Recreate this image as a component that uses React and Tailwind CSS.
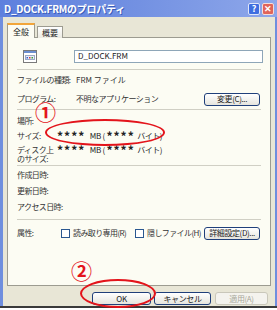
import React from "react";

const font = { fontFamily: '"Noto Sans CJK JP", "Noto Sans", sans-serif' };

const Sep = () => <div className="mx-[9px] h-px bg-[#d0cfc4]" />;

const Label = ({ children, w = "w-[59px]", className = "" }) => (
  <div className={w + " shrink-0 whitespace-nowrap text-[8px] tracking-[-0.6px] text-[#333] " + className}>
    {children}
  </div>
);

const XpButton = ({ children, className = "", disabled }) => (
  <div
    className={
      "h-[13px] rounded-[3px] border flex items-center justify-center whitespace-nowrap text-[8px] tracking-[-0.4px] leading-none " +
      (disabled
        ? "border-[#c9c7ba] bg-[#f4f3ee] text-[#a8a799]"
        : "border-[#1f3f7a] bg-gradient-to-b from-white to-[#e6e5de] text-[#222]") +
      " " +
      className
    }
  >
    {children}
  </div>
);

const Checkbox = () => <div className="w-[9px] h-[9px] border border-[#2a5790] bg-white shrink-0" />;

const FileIcon = () => (
  <svg width="14" height="13" viewBox="0 0 14 13">
    <rect x="0.5" y="0.5" width="13" height="12" fill="#fff" stroke="#7a7a7a" />
    <rect x="1" y="1" width="12" height="2" fill="#6c8fd0" />
    <rect x="2.5" y="5.5" width="9" height="4" fill="#e8eef8" stroke="#9aa9c6" />
    <rect x="3.5" y="7" width="1.5" height="1.5" fill="#3b5bd0" />
    <rect x="6" y="7" width="1.5" height="1.5" fill="#d03a3a" />
    <rect x="8.5" y="7" width="1.5" height="1.5" fill="#3b9a3b" />
  </svg>
);

const SizeValue = () => (
  <div className="h-[10px] text-[8px] text-[#222] whitespace-pre leading-none flex items-center">
    <span className="font-bold text-[12px] leading-[10px] tracking-[1px]">****</span>
    <span className="tracking-[-0.3px]">{"   MB ( "}</span>
    <span className="font-bold text-[12px] leading-[10px] tracking-[1px]">****</span>
    <span className="tracking-[-0.5px]">{"  バイト)"}</span>
  </div>
);

export default function App() {
  return (
    <div className="relative w-[277px] h-[310px] bg-white overflow-hidden" style={font}>
      <div className="w-[277px] h-[308px] flex flex-col bg-[#e8e6d6] border-b-2 border-[#3a3a3a]">
        {/* title bar */}
        <div className="h-[17px] shrink-0 flex items-center pl-[4px] pr-[3px] bg-gradient-to-r from-[#5e80de] via-[#7391e2] to-[#8ea7ea]">
          <div className="text-white text-[10px] font-bold tracking-tight leading-none flex-1 [text-shadow:1px_1px_0_#3b5cb8]">
            D_DOCK.FRMのプロパティ
          </div>
          <div className="w-[12px] h-[12px] rounded-[2px] bg-[#3f6ee0] border border-[#dfe6fa] text-white text-[9px] font-bold flex items-center justify-center leading-none">
            ?
          </div>
          <div className="ml-[2px] w-[12px] h-[12px] rounded-[2px] bg-[#e0645a] border border-[#f6dcd8] text-white text-[9px] font-bold flex items-center justify-center leading-none">
            ✕
          </div>
        </div>

        <div className="flex-1 flex flex-col border-l-[3px] border-r-[2px] border-[#6f8ede] pl-[4px] pr-[4px]">
          {/* tabs */}
          <div className="h-[17px] mt-[4px] flex items-end relative z-10 -mb-px">
            <div className="w-[28px] h-[15px] bg-[#fcfcf3] border-x border-[#9c9b90] border-t-2 border-t-[#f2a53a] flex items-center justify-center text-[8px] text-[#222]">
              全般
            </div>
            <div className="ml-[2px] w-[26px] h-[12px] bg-gradient-to-b from-white to-[#ecebe2] border border-b-0 border-[#9c9b90] flex items-center justify-center text-[8px] text-[#222]">
              概要
            </div>
          </div>

          {/* panel */}
          <div className="h-[249px] bg-[#fcfcf3] border border-[#9c9b90] flex flex-col">
            <div className="mt-[10px] h-[16px] flex items-center">
              <div className="w-[66px] pl-[15px] shrink-0">
                <FileIcon />
              </div>
              <div className="h-[13px] w-[189px] border border-[#8ea6b8] bg-white text-[8px] leading-none flex items-center pl-[3px] text-[#222]">
                D_DOCK.FRM
              </div>
            </div>
            <div className="mt-[5px]">
              <Sep />
            </div>

            <div className="mt-[3px] h-[14px] flex items-center pl-[9px]">
              <Label>ファイルの種類:</Label>
              <div className="text-[8px] text-[#333]">FRM ファイル</div>
            </div>
            <div className="mt-[5px] h-[14px] flex items-center pl-[9px] pr-[10px]">
              <Label>プログラム:</Label>
              <div className="text-[8px] tracking-[-0.5px] text-[#333] flex-1">不明なアプリケーション</div>
              <XpButton className="w-[56px]">変更(C)...</XpButton>
            </div>
            <div className="mt-[3px]">
              <Sep />
            </div>

            <div className="mt-[5px] h-[12px] flex items-center pl-[9px]">
              <Label>場所:</Label>
            </div>
            <div className="mt-[3px] h-[12px] flex items-center pl-[9px]">
              <Label w="w-[40px]">サイズ:</Label>
              <SizeValue />
            </div>
            <div className="mt-[3px] h-[18px] flex items-start pl-[9px]">
              <Label w="w-[40px]" className="leading-[9px]">
                ディスク上
                <br />
                のサイズ:
              </Label>
              <SizeValue />
            </div>
            <div className="mt-[2px]">
              <Sep />
            </div>

            <div className="mt-[3px] h-[12px] flex items-center pl-[9px]">
              <Label>作成日時:</Label>
            </div>
            <div className="mt-[4px] h-[12px] flex items-center pl-[9px]">
              <Label>更新日時:</Label>
            </div>
            <div className="mt-[4px] h-[12px] flex items-center pl-[9px]">
              <Label>アクセス日時:</Label>
            </div>
            <div className="mt-[6px]">
              <Sep />
            </div>

            <div className="mt-[6px] h-[14px] flex items-center pl-[9px] pr-[10px]">
              <Label w="w-[44px]">属性:</Label>
              <Checkbox />
              <div className="ml-[3px] w-[62px] whitespace-nowrap text-[8px] tracking-[-0.6px] text-[#333]">読み取り専用(R)</div>
              <Checkbox />
              <div className="ml-[3px] whitespace-nowrap text-[8px] tracking-[-0.6px] text-[#333] flex-1">隠しファイル(H)</div>
              <XpButton className="w-[56px]">詳細設定(D)...</XpButton>
            </div>
          </div>

          {/* bottom buttons */}
          <div className="mt-[6px] flex pl-[85px] gap-[3px]">
            <XpButton className="w-[59px]">OK</XpButton>
            <XpButton className="w-[57px]">キャンセル</XpButton>
            <XpButton disabled className="ml-[1px] w-[53px]">適用(A)</XpButton>
          </div>
        </div>
      </div>

      {/* annotations */}
      <div className="absolute left-[35px] top-[101px] text-[#e3141b] text-[21px] font-bold leading-none">①</div>
      <div className="absolute left-[45px] top-[119px] w-[120px] h-[27px] rounded-[50%] border-2 border-[#e3141b]" />
      <div className="absolute left-[71px] top-[260px] text-[#e3141b] text-[21px] font-bold leading-none">②</div>
      <div className="absolute left-[80px] top-[279px] w-[76px] h-[29px] rounded-[50%] border-2 border-[#e3141b]" />
    </div>
  );
}
